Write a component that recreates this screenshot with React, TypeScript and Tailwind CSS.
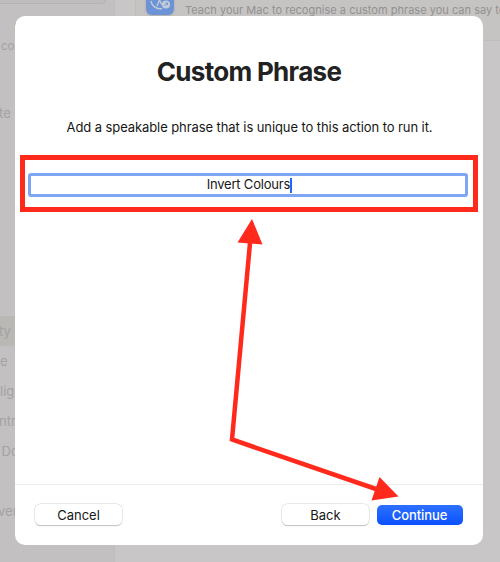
import React from "react";

const sidebarRows = [
  { label: "ty", pad: "-ml-px", active: true },
  { label: "e", pad: "pl-0" },
  { label: "lige", pad: "pl-0" },
  { label: "ntr", pad: "-ml-px" },
  { label: "Do", pad: "pl-[1.5px]" },
  { label: "", pad: "" },
  { label: "ver", pad: "-ml-[2px]" },
];

function Sidebar() {
  return (
    <aside className="flex h-full w-[115px] shrink-0 flex-col border-r border-[#bebcbd] bg-[#c2c0c1] text-[13px] text-[#a4a2a3]">
      <div className="h-1 w-[106px] shrink-0 rounded-br-[5px] border-r border-b border-[#b4b2b3] bg-[#bebcbd]" />
      <div className="mt-[14px] h-5 shrink-0 pl-[14px] leading-5 text-[#868485]">I</div>
      <div className="h-4 shrink-0 pl-px text-[11.5px] leading-4">cou</div>
      <div className="mt-[49px] -ml-px h-5 shrink-0 leading-5">te</div>
      <nav className="mt-[193px] flex flex-col">
        {sidebarRows.map((row, i) => (
          <div key={i} className={`h-[30px] whitespace-pre leading-[30px] ${row.active ? "bg-[#b9b8b5]" : ""}`}>
            <span className={`block ${row.pad}`}>{row.label}</span>
          </div>
        ))}
      </nav>
    </aside>
  );
}

function Settings() {
  return (
    <section className="flex h-full min-w-0 flex-1 flex-col bg-[#c8c6c7]">
      <div className="ml-5 flex h-[41px] shrink-0 border-b border-l border-[#bebdbe] bg-[#c6c4c3]">
        <div className="-mt-[13px] ml-[10px] h-7 w-7 shrink-0 rounded-[6px] bg-[#6b93d6] shadow-sm">
          <svg viewBox="0 0 28 28" className="h-7 w-7" fill="none" stroke="#c4cbd6" strokeWidth="1.4">
            <path d="M16 21.5A9 9 0 0 1 5 14" />
            <path d="m11 19 2.5-6 2.5 5" />
            <circle cx="20" cy="17.5" r="4" fill="#c4cbd6" stroke="none" />
            <path d="m18.5 19 3-3m-2 0h2v2" stroke="#6b93d6" strokeWidth="1" />
          </svg>
        </div>
        <p className="mt-[1px] ml-[11px] h-[18px] whitespace-nowrap text-[11px] leading-[18px] tracking-[0.02px] text-[#929091]">
          Teach your Mac to recognise a custom phrase you can say to
        </p>
      </div>
    </section>
  );
}

function PlainButton({ children }: { children: React.ReactNode }) {
  return (
    <button className="h-[21px] w-[87px] rounded-[5.5px] bg-white pl-px text-[13px] leading-[20px] text-[#171717] shadow-[0_0_0_0.5px_#d4d4d4,0_1px_1px_#b5b5b5]">
      {children}
    </button>
  );
}

function Dialog() {
  return (
    <main className="absolute top-4 left-[15px] flex h-[529px] w-[468px] flex-col overflow-hidden rounded-[10px] bg-white">
      <h1 className="mt-[40px] h-8 text-center text-[26px] leading-8 font-bold tracking-[-0.7px] text-[#222]">Custom Phrase</h1>
      <p className="mt-[29px] h-5 whitespace-nowrap pl-px text-center text-[13px] leading-5 tracking-[-0.085px] text-[#171717]">
        Add a speakable phrase that is unique to this action to run it.
      </p>
      <div className="mt-[18px] ml-[5.4px] flex h-[57px] w-[458px] items-center justify-center border-[5px] border-[#ff2a1c] pt-[3px] pr-[2px]">
        <div className="flex h-6 w-[440px] items-center justify-center rounded-[3px] border-[3px] border-[#7ea6f5] bg-white pl-[2px] text-[13px] text-[#171717]">
          <span className="tracking-[-0.2px]">Invert Colours</span>
          <span className="h-[15px] w-[2px] bg-[#2266ff]" />
        </div>
      </div>
      <footer className="mt-auto flex h-[61px] shrink-0 items-start border-t border-[#ececec] pt-[19px] pl-[19.5px]">
        <PlainButton>Cancel</PlainButton>
        <div className="ml-[160px] flex gap-2">
          <PlainButton>Back</PlainButton>
          <button className="mt-[0.5px] h-[20.5px] w-[86px] rounded-[5px] bg-gradient-to-b from-[#2d70ff] to-[#0a50ff] text-[13px] leading-[20px] font-medium tracking-[-0.1px] text-white">
            Continue
          </button>
        </div>
      </footer>
    </main>
  );
}

export default function App() {
  return (
    <div className="relative flex h-[562px] w-[500px] overflow-hidden font-[Inter,sans-serif]">
      <Sidebar />
      <Settings />
      <Dialog />
      <svg viewBox="0 0 500 562" className="pointer-events-none absolute inset-0 h-full w-full" fill="#ff2a1c">
        <path d="M250 243 232 439.5 376 489" fill="none" stroke="#ff2a1c" strokeWidth="4.5" />
        <path d="m252 219 10.5 25.5-25-2zM398.5 496.5 371.5 500.5 379.5 477z" />
      </svg>
    </div>
  );
}
